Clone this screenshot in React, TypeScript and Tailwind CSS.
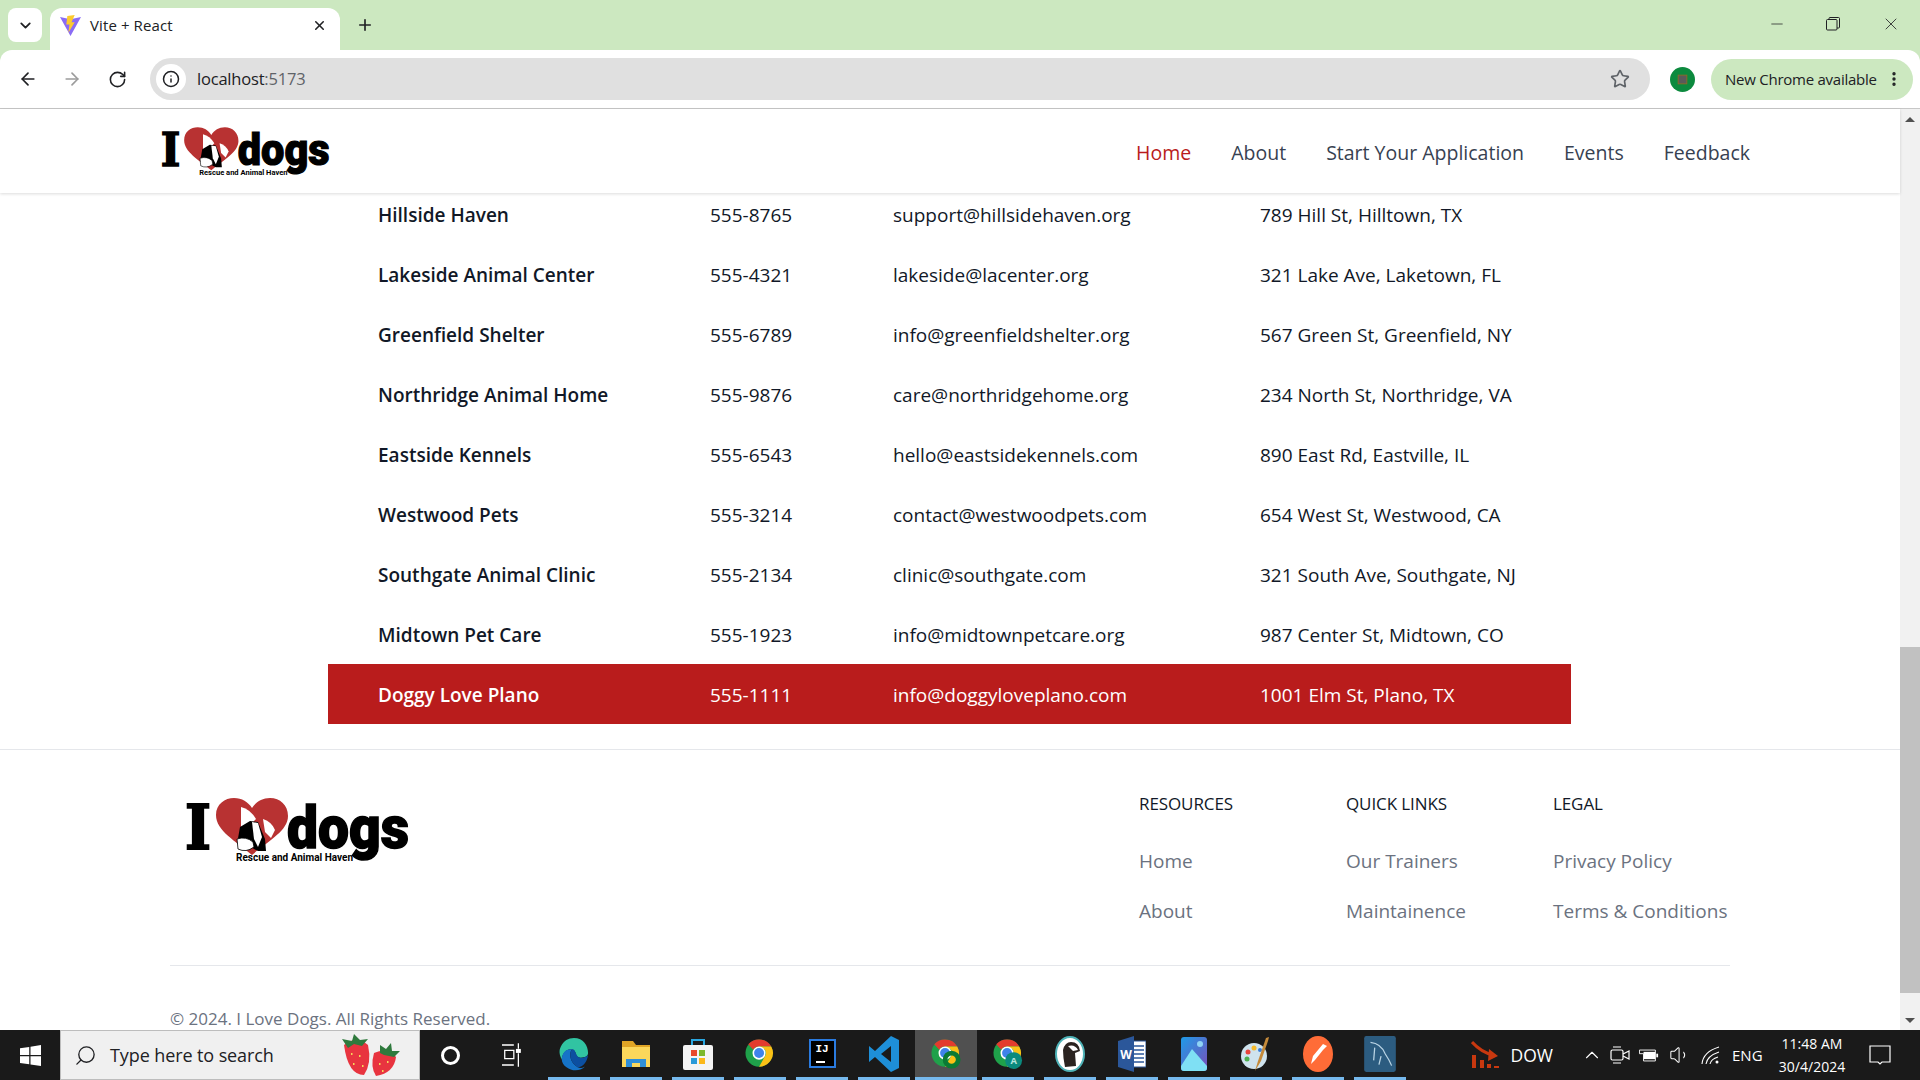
import { ArrowLeft, ArrowRight, ChevronDown, ChevronUp, EllipsisVertical, Info, Minus, Plus, RotateCw, Search, Star, Volume1, X } from 'lucide-react'

const shelters = [
  { name: 'Hillside Haven', phone: '555-8765', email: 'support@hillsidehaven.org', address: '789 Hill St, Hilltown, TX' },
  { name: 'Lakeside Animal Center', phone: '555-4321', email: 'lakeside@lacenter.org', address: '321 Lake Ave, Laketown, FL' },
  { name: 'Greenfield Shelter', phone: '555-6789', email: 'info@greenfieldshelter.org', address: '567 Green St, Greenfield, NY' },
  { name: 'Northridge Animal Home', phone: '555-9876', email: 'care@northridgehome.org', address: '234 North St, Northridge, VA' },
  { name: 'Eastside Kennels', phone: '555-6543', email: 'hello@eastsidekennels.com', address: '890 East Rd, Eastville, IL' },
  { name: 'Westwood Pets', phone: '555-3214', email: 'contact@westwoodpets.com', address: '654 West St, Westwood, CA' },
  { name: 'Southgate Animal Clinic', phone: '555-2134', email: 'clinic@southgate.com', address: '321 South Ave, Southgate, NJ' },
  { name: 'Midtown Pet Care', phone: '555-1923', email: 'info@midtownpetcare.org', address: '987 Center St, Midtown, CO' },
  { name: 'Doggy Love Plano', phone: '555-1111', email: 'info@doggyloveplano.com', address: '1001 Elm St, Plano, TX', active: true },
]

const footerColumns = [
  { title: 'RESOURCES', width: 'w-[207px]', links: ['Home', 'About'] },
  { title: 'QUICK LINKS', width: 'w-[207px]', links: ['Our Trainers', 'Maintainence'] },
  { title: 'LEGAL', width: 'w-[177px]', links: ['Privacy Policy', 'Terms & Conditions'] },
]

function Logo({ className }: { className: string }) {
  return (
    <svg viewBox="0 0 240 70" className={className}>
      <text x="5" y="54" fontFamily="DejaVu Serif" fontWeight="700" fontSize="62" textLength="26" lengthAdjust="spacingAndGlyphs" fill="#000" stroke="#000" strokeWidth="2">I</text>
      <path d="M72 60 C56 46 36 36 36 20 C36 9 45 3 54 3 C62 3 68 7 72 13 C76 7 82 3 90 3 C100 3 108 10 108 21 C108 36 88 46 72 60Z" fill="#b83232" />
      <path d="M61 12 Q70 14 76 24 L70 30 L61 32Z" fill="#fff" />
      <path d="M83 24 Q92 27 95 35 L91 43 L85 37Z" fill="#fff" />
      <path d="M60 32 L70 26 L78 27 L85 44 L86 56 L78 56 L74 54 L66 48 L57 49Z" fill="#000" />
      <path d="M72 27 L78 28 L82 42 L78 52 L74 44Z" fill="#fff" />
      <path d="M57 44 Q66 41 73 47 L74 52 Q66 58 58 54Z" fill="#fff" stroke="#000" strokeWidth="0.8" />
      <text x="107" y="53" fontFamily="Roboto" fontWeight="900" fontSize="60" textLength="122" lengthAdjust="spacingAndGlyphs" fill="#000" stroke="#000" strokeWidth="1.5">dogs</text>
      <text x="56" y="66" fontFamily="Roboto" fontWeight="700" fontSize="10.5" textLength="117" lengthAdjust="spacingAndGlyphs" fill="#000">Rescue and Animal Haven</text>
    </svg>
  )
}

function ChromeIcon({ badge }: { badge?: 'green' | 'a' }) {
  return (
    <svg viewBox="0 0 32 32" className="w-[30px] h-[30px]">
      <circle cx="15" cy="15" r="14.5" fill="#1fa14a" />
      <path d="M15 .5 A14.5 14.5 0 0 1 28 8 L15 8 A7 7 0 0 0 8.8 11.5 L3.5 5.5 A14.5 14.5 0 0 1 15 .5Z" fill="#e33b2e" />
      <path d="M28 8 A14.5 14.5 0 0 1 15 29.5 L21 19 A7 7 0 0 0 21 11 L15 8Z" fill="#fbc116" />
      <circle cx="15" cy="15" r="7" fill="#fff" />
      <circle cx="15" cy="15" r="5.3" fill="#3f83ea" />
      {badge === 'green' && <circle cx="22" cy="22" r="7" fill="none" stroke="#0b7a34" strokeWidth="5" />}
      {badge === 'a' && (
        <>
          <circle cx="22" cy="23" r="9" fill="#0b8a7e" />
          <text x="22" y="27" fontSize="10" fontWeight="700" textAnchor="middle" fill="#b9e4df" fontFamily="Open Sans">A</text>
        </>
      )}
    </svg>
  )
}

function TaskIcon({ children, active }: { children: React.ReactNode; active?: boolean }) {
  return (
    <div className={`w-[62px] h-[50px] flex items-stretch justify-center ${active ? 'bg-[#505050]' : ''}`}>
      <div className={`flex items-center justify-center w-full border-b-[3px] border-[#76b9ed] ${active ? '' : 'mx-[5px]'}`}>{children}</div>
    </div>
  )
}

function BrowserChrome() {
  return (
    <div className="shrink-0 bg-[#cce8c0]">
      <div className="h-[50px] flex items-end text-[#202124]">
        <div className="ml-2 mb-2 w-[34px] h-[34px] bg-white rounded-lg flex items-center justify-center">
          <ChevronDown size={17} strokeWidth={2.5} />
        </div>
        <div className="ml-2 w-[290px] h-[42px] bg-white rounded-t-xl flex items-center pl-[10px] pr-[13px] pb-[7px]">
          <svg viewBox="0 0 20 20" className="w-[21px] h-[21px]">
            <path d="M0 2 L10 4 L20 2 L10 20Z" fill="#8a6cf5" />
            <path d="M7 1 L14 0 L11 7 L14 7 L8 17 L9 9 L6 9Z" fill="#fdcb2e" />
          </svg>
          <span className="ml-[9px] text-[15px] tracking-[0.1px]">Vite + React</span>
          <X size={15} strokeWidth={2.5} className="ml-auto" />
        </div>
        <Plus size={18} strokeWidth={2.2} className="ml-4 mb-4" />
        <div className="ml-auto h-full flex items-center pb-[2px]">
          <Minus size={18} strokeWidth={1} className="mr-[40px]" />
          <svg viewBox="0 0 14 14" className="w-[14px] h-[14px] mr-[41px]" fill="none" stroke="#202124">
            <rect x="0.5" y="2.5" width="10.5" height="10.5" rx="1" />
            <path d="M3 2.5 V1.5 Q3 .5 4 .5 H12.5 Q13.5 .5 13.5 1.5 V10 Q13.5 11 12.5 11 H11" />
          </svg>
          <X size={20} strokeWidth={1} className="mr-[19px]" />
        </div>
      </div>
      <div className="h-[59px] bg-white rounded-t-xl border-b border-[#c7c7c7] flex items-center text-[#202124]">
        <ArrowLeft size={20} strokeWidth={2} className="ml-[18px]" />
        <ArrowRight size={20} strokeWidth={2} className="ml-[24px] text-[#9c9c9c]" />
        <RotateCw size={19} strokeWidth={2} className="ml-[26px]" />
        <div className="ml-[23px] w-[1500px] h-[42px] bg-[#e0e0e0] rounded-full flex items-center pl-[6px] pr-[20px]">
          <div className="w-[30px] h-[30px] bg-white rounded-full flex items-center justify-center">
            <Info size={18} strokeWidth={2} />
          </div>
          <span className="ml-[11px] text-[16.5px] tracking-[-0.2px]">localhost<span className="text-[#5f6368]">:5173</span></span>
          <Star size={20} strokeWidth={2} className="ml-auto text-[#5f6368]" />
        </div>
        <svg viewBox="0 0 26 26" className="ml-[20px] w-[25px] h-[25px] shrink-0">
          <circle cx="13" cy="13" r="13" fill="#0c8a3e" />
          <rect x="8.5" y="8.5" width="9" height="9" fill="#5a5a5a" stroke="#8a6a2a" />
        </svg>
        <div className="ml-[16px] w-[202px] h-[41px] bg-[#cce8c0] rounded-full flex items-center pl-[14px] shrink-0">
          <span className="text-[15px] tracking-[-0.25px] whitespace-nowrap">New Chrome available</span>
          <EllipsisVertical size={18} strokeWidth={2.5} className="ml-auto mr-[10px]" />
        </div>
      </div>
    </div>
  )
}

function SiteHeader() {
  return (
    <header className="relative z-10 h-[84px] shrink-0 bg-white shadow-[0_1px_3px_rgba(0,0,0,0.14)] flex items-center pl-[157px] pr-[150px]">
      <Logo className="w-[181px] h-[53px]" />
      <nav className="ml-auto pt-[3px] flex items-center gap-10 text-[19.5px] font-medium text-[#374151]">
        <a className="text-[#b91c1c]">Home</a>
        <a>About</a>
        <a>Start Your Application</a>
        <a>Events</a>
        <a>Feedback</a>
      </nav>
    </header>
  )
}

function ShelterTable() {
  return (
    <div className="ml-[328px] -mt-[9px] w-[1243px] text-[19px] text-[#111827]">
      {shelters.map((s) => (
        <div
          key={s.name}
          className={`grid grid-cols-[332px_183px_367px_1fr] h-[60px] items-center pl-[50px] pt-[2px] ${s.active ? 'bg-[#b91c1c] text-white' : ''}`}
        >
          <span className="font-semibold">{s.name}</span>
          <span>{s.phone}</span>
          <span>{s.email}</span>
          <span>{s.address}</span>
        </div>
      ))}
    </div>
  )
}

function SiteFooter() {
  return (
    <footer className="mt-[25px] border-t border-[#e5e7eb]">
      <div className="mx-auto w-[1560px]">
        <div className="flex h-[216px] border-b border-[#e5e7eb]">
          <Logo className="ml-[10px] mt-[45px] w-[240px] h-[70px]" />
          <div className="ml-auto flex pt-[42px]">
            {footerColumns.map((col) => (
              <div key={col.title} className={col.width}>
                <h3 className="text-[17px] font-medium text-[#111827] leading-[24px] tracking-[-0.1px]">{col.title}</h3>
                <ul className="mt-[32px] flex flex-col gap-[24px] text-[19px] font-medium text-[#6b7280]">
                  {col.links.map((l) => (
                    <li key={l} className="leading-[26px] whitespace-nowrap">{l}</li>
                  ))}
                </ul>
              </div>
            ))}
          </div>
        </div>
        <p className="mt-[41px] text-[17px] leading-[24px] text-[#6b7280]">© 2024. I Love Dogs. All Rights Reserved.</p>
      </div>
    </footer>
  )
}

function Scrollbar() {
  return (
    <div className="w-5 shrink-0 bg-[#f1f1f1] flex flex-col items-center">
      <div className="h-[20px] flex items-center justify-center">
        <div className="w-0 h-0 border-x-[5px] border-x-transparent border-b-[5px] border-b-[#505050]" />
      </div>
      <div className="mt-[518px] w-full h-[346px] bg-[#c1c1c1]" />
      <div className="mt-auto h-[20px] flex items-center justify-center">
        <div className="w-0 h-0 border-x-[5px] border-x-transparent border-t-[5px] border-t-[#505050]" />
      </div>
    </div>
  )
}

function Taskbar() {
  return (
    <div className="h-[50px] shrink-0 bg-[#1a1a1a] flex items-stretch text-white relative z-20">
      <div className="w-[60px] flex items-center justify-center">
        <svg viewBox="0 0 20 20" className="w-[21px] h-[21px]" fill="#fff">
          <path d="M0 3 L8.8 1.8 V9.5 H0Z M10 1.6 L20 0 V9.5 H10Z M0 10.7 H8.8 V18.4 L0 17.2Z M10 10.7 H20 V20 L10 18.6Z" />
        </svg>
      </div>
      <div className="w-[360px] bg-[#f0f0f0] border border-[#bdbdbd] flex items-center pl-[13px] text-[#202124]">
        <Search size={23} strokeWidth={1.4} className="-scale-x-100" />
        <span className="ml-[13px] text-[18px] tracking-[-0.1px]">Type here to search</span>
        <svg viewBox="0 0 64 44" className="ml-auto mr-[16px] w-[66px] h-[44px]">
          <path d="M6 12 Q18 2 30 12 Q34 30 26 42 Q10 42 6 12Z" fill="#e8343f" />
          <path d="M8 12 L4 6 L14 8 L16 1 L22 7 L30 6 L24 13 L16 11 L10 15Z" fill="#2f7a3d" />
          <path d="M36 20 Q50 14 58 24 Q56 40 38 43 Q32 34 36 20Z" fill="#e8343f" />
          <path d="M42 20 L42 12 L48 16 L53 10 L54 18 L62 18 L56 24 L46 22Z" fill="#2f7a3d" />
          <path d="M13 20 h1.5 v2 h-1.5Z M21 22 h1.5 v2 h-1.5Z M15 30 h1.5 v2 h-1.5Z M24 32 h1.5 v2 h-1.5Z M41 30 h1.5 v2 h-1.5Z M49 28 h1.5 v2 h-1.5Z M44 37 h1.5 v2 h-1.5Z" fill="#f6d65a" />
        </svg>
      </div>
      <div className="w-[60px] flex items-center justify-center">
        <div className="w-[19px] h-[19px] rounded-full border-[3px] border-white" />
      </div>
      <div className="w-[63px] flex items-center justify-center">
        <svg viewBox="0 0 22 26" className="w-[20px] h-[24px]" fill="none" stroke="#fff" strokeWidth="1.4">
          <path d="M0 2 H13 M3 8 H13 V17 H3Z M0 24 H13 M18 0 V6 M18 11 V26" />
          <rect x="16" y="7" width="4" height="3" fill="#fff" />
        </svg>
      </div>
      <TaskIcon>
        <svg viewBox="0 0 32 36" className="w-[30px] h-[38px]">
          <path d="M16 1 C26 1 31 9 31 17 C31 20 28 22 23 22 C16 22 20 14 13 13 C6 13 3 20 3 24 C0 18 0 14 2 10 C5 4 10 1 16 1Z" fill="#31c4a2" />
          <path d="M3 24 C3 16 8 12 14 13 C10 17 12 28 20 32 C24 34 27 32 28 31 C24 36 14 37 8 32 C5 30 3 27 3 24Z" fill="#1673c7" />
          <path d="M14 13 C19 13 17 22 23 22 C27 22 29 21 31 19 C30 26 26 32 20 32 C12 28 10 17 14 13Z" fill="#0c4fa0" />
        </svg>
      </TaskIcon>
      <TaskIcon>
        <svg viewBox="0 0 28 30" className="w-[28px] h-[30px]">
          <path d="M0 2 H11 L14 6 H28 V28 H0Z" fill="#e0a526" />
          <rect x="0" y="8" width="28" height="20" fill="#fbd75b" />
          <path d="M4 28 V20 H24 V28 H18 V24 H10 V28Z" fill="#2f8fd8" />
        </svg>
      </TaskIcon>
      <TaskIcon>
        <svg viewBox="0 0 30 32" className="w-[30px] h-[32px]">
          <path d="M9 7 V2 H21 V7" fill="none" stroke="#2aa7e0" strokeWidth="2" />
          <rect x="0" y="7" width="30" height="25" rx="2" fill="#f4f4f4" />
          <rect x="8" y="12" width="6" height="6" fill="#e8492c" />
          <rect x="16" y="12" width="6" height="6" fill="#7cb82c" />
          <rect x="8" y="20" width="6" height="6" fill="#2a9ad8" />
          <rect x="16" y="20" width="6" height="6" fill="#fbb81a" />
        </svg>
      </TaskIcon>
      <TaskIcon><ChromeIcon /></TaskIcon>
      <TaskIcon>
        <div className="w-[27px] h-[29px] bg-black border-[2px] border-[#2a7be0] text-[11px] font-bold leading-[13px] pl-[5px] pt-[2px] font-['Liberation_Mono',monospace]">
          IJ
          <div className="w-[9px] h-[2px] bg-white mt-[5px]" />
        </div>
      </TaskIcon>
      <TaskIcon>
        <svg viewBox="0 0 30 36" className="w-[30px] h-[36px]">
          <path d="M22 0 L30 4 V32 L22 36 L6 21 L0 26 V10 L6 15Z M22 10 L12 18 L22 26Z" fill="#1e8fd8" fillRule="evenodd" />
        </svg>
      </TaskIcon>
      <TaskIcon active><ChromeIcon badge="green" /></TaskIcon>
      <TaskIcon><ChromeIcon badge="a" /></TaskIcon>
      <TaskIcon>
        <svg viewBox="0 0 30 36" className="w-[30px] h-[38px]">
          <ellipse cx="15" cy="18" rx="14" ry="17" fill="#fff" stroke="#4fb3b8" strokeWidth="2" />
          <path d="M8 14 Q10 6 16 6 Q24 6 25 15 L20 17 L21 30 L10 31 Q8 22 8 14Z" fill="#2a2320" />
          <path d="M13 10 Q20 8 23 14 L18 15Z" fill="#fff" />
        </svg>
      </TaskIcon>
      <TaskIcon>
        <svg viewBox="0 0 28 36" className="w-[28px] h-[36px]">
          <rect x="12" y="5" width="16" height="26" fill="#fff" stroke="#2b579a" />
          <path d="M15 10 H26 M15 14 H26 M15 18 H26 M15 22 H26 M15 26 H26" stroke="#2b579a" strokeWidth="1.6" />
          <path d="M0 5 L16 0 V36 L0 31Z" fill="#2b579a" />
          <text x="8" y="23" fontSize="12" fontWeight="700" textAnchor="middle" fill="#fff" fontFamily="Open Sans">W</text>
        </svg>
      </TaskIcon>
      <TaskIcon>
        <svg viewBox="0 0 28 36" className="w-[28px] h-[36px]">
          <defs>
            <linearGradient id="photos" x1="0" y1="0" x2="1" y2="1">
              <stop offset="0" stopColor="#1e9be8" />
              <stop offset="1" stopColor="#7a4fb8" />
            </linearGradient>
          </defs>
          <rect x="1" y="1" width="26" height="34" rx="3" fill="url(#photos)" />
          <circle cx="20" cy="8" r="3" fill="#8fd4f4" />
          <path d="M1 30 L12 13 L27 30 V32 Q27 35 24 35 H4 Q1 35 1 32Z" fill="#7fe0f4" />
        </svg>
      </TaskIcon>
      <TaskIcon>
        <svg viewBox="0 0 30 38" className="w-[30px] h-[38px]">
          <ellipse cx="13" cy="21" rx="13" ry="13" fill="#cfe3ee" />
          <circle cx="7" cy="17" r="2.5" fill="#e8443c" />
          <circle cx="13" cy="13" r="2.5" fill="#f4b92c" />
          <circle cx="6" cy="24" r="2.5" fill="#4caf50" />
          <circle cx="19" cy="15" r="2" fill="#3b7fd8" />
          <path d="M14 36 L17 26 L25 3 L28 2 L27 6 L20 26Z" fill="#c58a3a" />
        </svg>
      </TaskIcon>
      <TaskIcon>
        <svg viewBox="0 0 30 36" className="w-[30px] h-[36px]">
          <ellipse cx="15" cy="18" rx="15" ry="18" fill="#ff6c37" />
          <path d="M20 8 L10 20 L8 28 L12 24 L20 14 L24 10Z" fill="#fff" />
        </svg>
      </TaskIcon>
      <TaskIcon>
        <svg viewBox="0 0 30 36" className="w-[32px] h-[38px]">
          <rect x="0" y="1" width="30" height="34" rx="2" fill="#2c5c80" />
          <path d="M6 7 Q16 8 20 18 Q24 24 26 29 M10 12 L9 24 M16 20 L14 28" fill="none" stroke="#b9d4e4" strokeWidth="1.2" />
        </svg>
      </TaskIcon>
      <div className="ml-auto flex items-center">
        <svg viewBox="0 0 30 30" className="w-[30px] h-[30px]">
          <path d="M1 2 Q10 12 22 15" fill="none" stroke="#c8380f" strokeWidth="3" />
          <path d="M18 9 L27 16 L17 21Z" fill="#c8380f" />
          <path d="M1 15 H5 V28 H1Z M9 20 H13 V28 H9Z M16 24 H20 V28 H16Z M23 26 H28 V28 H23Z" fill="#c8380f" />
        </svg>
        <span className="ml-[10px] text-[17.5px]">DOW</span>
        <ChevronUp size={22} strokeWidth={1.2} className="ml-[28px]" />
        <svg viewBox="0 0 20 20" className="ml-[7px] w-[20px] h-[20px]" fill="none" stroke="#fff" strokeWidth="1.2">
          <rect x="1" y="5" width="12" height="10" rx="1.5" />
          <path d="M13 9 L19 6 V14 L13 11 M3 2 H11 M3 18 H11" />
        </svg>
        <svg viewBox="0 0 22 14" className="ml-[9px] w-[20px] h-[13px]">
          <path d="M0.5 1 H18 V13 H5 V5 H0.5Z" fill="none" stroke="#fff" />
          <rect x="5" y="3" width="13" height="8" fill="#fff" />
          <rect x="19" y="5" width="2" height="4" fill="#fff" />
        </svg>
        <Volume1 size={22} strokeWidth={1.1} className="ml-[10px]" />
        <svg viewBox="0 0 20 20" className="ml-[10px] w-[20px] h-[20px]" fill="none" stroke="#fff" strokeWidth="1.1">
          <path d="M1 19 Q2 7 18 2 M5 19 Q6 11 18 7 M9 19 Q10 14 17 12" />
          <circle cx="16" cy="17" r="1.5" fill="#fff" stroke="none" />
        </svg>
        <span className="ml-[11px] text-[15px] w-[32px]">ENG</span>
        <div className="ml-[11px] w-[74px] text-center text-[14px] leading-[23px] whitespace-nowrap">
          <div>11:48 AM</div>
          <div>30/4/2024</div>
        </div>
        <svg viewBox="0 0 22 22" className="ml-[20px] mr-[29px] w-[22px] h-[22px]" fill="none" stroke="#fff" strokeWidth="1.2">
          <path d="M1 2 H21 V18 H13 L11 20 L9 18 H1Z" />
        </svg>
      </div>
    </div>
  )
}

export default function App() {
  return (
    <div className="h-screen w-full flex flex-col overflow-hidden bg-white font-['Open_Sans',sans-serif]">
      <BrowserChrome />
      <div className="flex-1 flex min-h-0">
        <div className="flex-1 min-w-0 flex flex-col">
          <SiteHeader />
          <main className="flex-1 min-h-0 overflow-hidden">
            <ShelterTable />
            <SiteFooter />
          </main>
        </div>
        <Scrollbar />
      </div>
      <Taskbar />
    </div>
  )
}
